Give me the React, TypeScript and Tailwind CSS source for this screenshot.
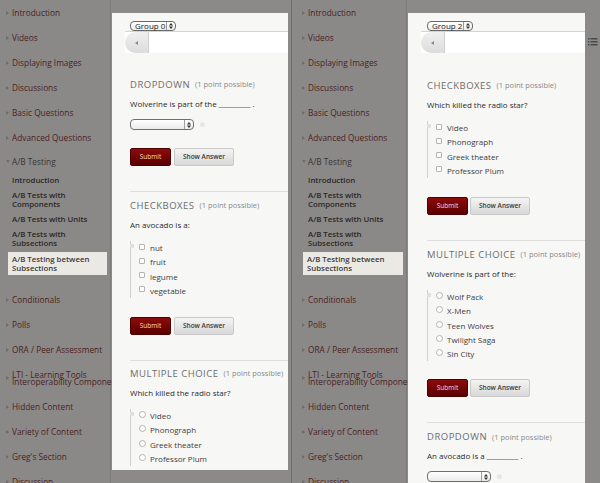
import React from "react";

const TOP_ITEMS = [
  "Introduction",
  "Videos",
  "Displaying Images",
  "Discussions",
  "Basic Questions",
  "Advanced Questions",
];

const BOTTOM_ITEMS = ["Hidden Content", "Variety of Content", "Greg's Section", "Discussion"];

function Chevron({ down }: { down?: boolean }) {
  return (
    <span className="flex w-[6px] shrink-0 items-center">
      {down ? (
        <svg width="4" height="3" viewBox="0 0 4 3">
          <path d="M0 0L4 0L2 3Z" fill="#6f6c6a" />
        </svg>
      ) : (
        <svg width="3" height="4" viewBox="0 0 3 4">
          <path d="M0 0L3 2L0 4Z" fill="#6f6c6a" />
        </svg>
      )}
    </span>
  );
}

function Row({ label, pad }: { label: string; pad: string }) {
  return (
    <div className={`flex h-[25px] items-center whitespace-nowrap ${pad}`}>
      <Chevron />
      <span className="text-[#4c1e23]">{label}</span>
    </div>
  );
}

function Sidebar({ wide }: { wide?: boolean }) {
  const pad = wide ? "pl-[10px]" : "pl-[6px]";
  const sub = wide ? "pl-[16px]" : "pl-[12px]";
  const box = wide ? "ml-[11px]" : "ml-[8px]";
  return (
    <div
      className={`${
        wide ? "w-[115px]" : "w-[111px]"
      } h-full shrink-0 border-r border-[#7d7c7a] bg-[#8a8987] text-[8.3px] leading-[9px]`}
    >
      {TOP_ITEMS.map((t) => (
        <Row key={t} label={t} pad={pad} />
      ))}
      <div className={`flex h-[23px] items-center ${pad}`}>
        <Chevron down />
        <span className="text-[#3a3432]">A/B Testing</span>
      </div>
      <div className="flex flex-col gap-[6px] pt-[3px] text-[7.8px] font-semibold text-[#2b2725]">
        <div className={sub}>Introduction</div>
        <div className={sub}>
          A/B Tests with
          <br />
          Components
        </div>
        <div className={sub}>A/B Tests with Units</div>
        <div className={sub}>
          A/B Tests with
          <br />
          Subsections
        </div>
        <div className={`${box} mr-[3px] -mt-[2px] bg-[#ebe9e3] pt-[3px] pb-[2px] pl-[4px] text-[#3c3937]`}>
          A/B Testing between
          <br />
          Subsections
        </div>
      </div>
      <div className="h-[12px]" />
      <Row label="Conditionals" pad={pad} />
      <Row label="Polls" pad={pad} />
      <Row label="ORA / Peer Assessment" pad={pad} />
      <div className={`flex h-[32px] items-center whitespace-nowrap ${pad}`}>
        <Chevron />
        <span className="leading-[7.5px] text-[#4c1e23]">
          LTI - Learning Tools
          <br />
          Interoperability Component
        </span>
      </div>
      {BOTTOM_ITEMS.map((t) => (
        <Row key={t} label={t} pad={pad} />
      ))}
    </div>
  );
}

function UpDown() {
  return (
    <svg width="4" height="6" viewBox="0 0 4 6">
      <path d="M0 2.4L2 0L4 2.4Z" fill="#333" />
      <path d="M0 3.6L2 6L4 3.6Z" fill="#333" />
    </svg>
  );
}

function GroupSelect({ label }: { label: string }) {
  return (
    <div className="flex h-[10px] w-[46px] items-center rounded-[4px] border border-[#6a6a6a] bg-gradient-to-b from-white to-[#ececec]">
      <span className="flex-1 pl-[4px] text-[8px] leading-[8px] text-[#222]">{label}</span>
      <span className="flex h-full w-[9px] items-center justify-center border-l border-[#9a9a9a]">
        <UpDown />
      </span>
    </div>
  );
}

function DropSelect() {
  return (
    <div className="flex items-center gap-[6px]">
      <div className="flex h-[11px] w-[64px] items-center rounded-[4px] border border-[#6f6f6f] bg-gradient-to-b from-white to-[#ebebeb]">
        <span className="flex-1" />
        <span className="flex h-full w-[9px] items-center justify-center border-l border-[#a0a0a0]">
          <UpDown />
        </span>
      </div>
      <span className="h-[5px] w-[5px] rounded-full bg-[#e6e6e6]" />
    </div>
  );
}

function NavBar() {
  return (
    <div className="ml-[13px] flex h-[22px] border-t border-[#d4d4d4] bg-white">
      <div className="flex w-[24px] items-center justify-center rounded-l-[11px] border-r border-[#cfcfcf] bg-gradient-to-b from-[#f0f0f0] to-[#dcdcdc]">
        <svg width="3" height="4" viewBox="0 0 3 4">
          <path d="M3 0L0 2L3 4Z" fill="#8a8a8a" />
        </svg>
      </div>
    </div>
  );
}

function Heading({ title }: { title: string }) {
  return (
    <div className="flex h-[12px] items-center whitespace-nowrap">
      <span className="text-[9.5px] tracking-[0.5px] text-[#6d6d6d]">{title}</span>
      <span className="ml-[5px] text-[7.5px] text-[#8a8a8a]">(1 point possible)</span>
    </div>
  );
}

function Prompt({ text }: { text: string }) {
  return <div className="mt-[7px] h-[12px] whitespace-nowrap text-[8px] leading-[12px] text-[#2a2a2a]">{text}</div>;
}

function Options({ items, radio }: { items: string[]; radio?: boolean }) {
  return (
    <div className="relative mt-[10px] border-l border-[#cfcfcf]">
      <span className="absolute top-[3px] -left-[1px] h-[4px] w-[4px] rounded-[1px] bg-[#e0e0e0]" />
      {items.map((o) => (
        <div key={o} className="flex h-[14.25px] items-center whitespace-nowrap">
          <span
            className={`ml-[8px] mb-[3px] h-[6px] w-[6px] border border-[#b4b4b4] bg-white ${
              radio ? "h-[7px] w-[7px] rounded-full" : "rounded-[1px]"
            }`}
          />
          <span className={`${radio ? "ml-[4px]" : "ml-[5px]"} text-[8px] text-[#3d3d3d]`}>{o}</span>
        </div>
      ))}
    </div>
  );
}

function Buttons({ gap, top }: { gap: string; top: string }) {
  return (
    <div className={`flex ${top} ${gap}`}>
      <div className="flex h-[18px] w-[41px] items-center justify-center rounded-[2px] border border-[#4c0000] bg-gradient-to-b from-[#8c0d0d] to-[#5c0000] text-[6.5px] text-[#f3dede]">
        Submit
      </div>
      <div className="flex h-[18px] w-[60px] items-center justify-center rounded-[2px] border border-[#c9c9c9] bg-gradient-to-b from-[#f4f4f4] to-[#d8d8d8] text-[6.5px] font-semibold text-[#3a3a3a]">
        Show Answer
      </div>
    </div>
  );
}

function Rule() {
  return <div className="mt-[25px] border-t border-[#dedede]" />;
}

function LeftCard() {
  return (
    <div className="relative mt-[13px] h-[457px] w-[176px] shrink-0 overflow-hidden bg-[#f7f7f6]">
      <div className="pt-[8px] pl-[18px]">
        <GroupSelect label="Group 0" />
      </div>
      <NavBar />
      <div className="pl-[18px]">
        <div className="mt-[26px]">
          <Heading title="DROPDOWN" />
        </div>
        <Prompt text="Wolverine is part of the _________ ." />
        <div className="mt-[9px]">
          <DropSelect />
        </div>
        <Buttons gap="gap-[3px]" top="mt-[18px]" />
        <Rule />
        <div className="mt-[8px]">
          <Heading title="CHECKBOXES" />
        </div>
        <Prompt text="An avocado is a:" />
        <Options items={["nut", "fruit", "legume", "vegetable"]} />
        <Buttons gap="gap-[3px]" top="mt-[19px]" />
        <Rule />
        <div className="mt-[7px]">
          <Heading title="MULTIPLE CHOICE" />
        </div>
        <Prompt text="Which killed the radio star?" />
        <Options radio items={["Video", "Phonograph", "Greek theater", "Professor Plum"]} />
      </div>
    </div>
  );
}

function RightCard() {
  return (
    <div className="relative mt-[13px] h-[470px] w-[177px] shrink-0 overflow-hidden bg-[#f7f7f6]">
      <div className="pt-[8px] pl-[19px]">
        <GroupSelect label="Group 2" />
      </div>
      <NavBar />
      <div className="pl-[19px]">
        <div className="mt-[27px]">
          <Heading title="CHECKBOXES" />
        </div>
        <Prompt text="Which killed the radio star?" />
        <Options items={["Video", "Phonograph", "Greek theater", "Professor Plum"]} />
        <Buttons gap="gap-[2px]" top="mt-[19px]" />
        <Rule />
        <div className="mt-[8px]">
          <Heading title="MULTIPLE CHOICE" />
        </div>
        <Prompt text="Wolverine is part of the:" />
        <Options radio items={["Wolf Pack", "X-Men", "Teen Wolves", "Twilight Saga", "Sin City"]} />
        <Buttons gap="gap-[2px]" top="mt-[18px]" />
        <Rule />
        <div className="mt-[8px]">
          <Heading title="DROPDOWN" />
        </div>
        <Prompt text="An avocado is a _________ ." />
        <div className="mt-[9px]">
          <DropSelect />
        </div>
      </div>
    </div>
  );
}

function ListIcon() {
  return (
    <svg width="10" height="10" viewBox="0 0 10 10">
      <rect x="0" y="1" width="1.5" height="1.5" fill="#4a4a4a" />
      <rect x="2.5" y="1" width="7" height="1.5" fill="#4a4a4a" />
      <rect x="0" y="4" width="1.5" height="1.5" fill="#4a4a4a" />
      <rect x="2.5" y="4" width="7" height="1.5" fill="#4a4a4a" />
      <rect x="0" y="7" width="1.5" height="1.5" fill="#4a4a4a" />
      <rect x="2.5" y="7" width="7" height="1.5" fill="#4a4a4a" />
    </svg>
  );
}

export default function App() {
  return (
    <div className="flex h-[483px] w-[600px] overflow-hidden bg-[#8b8a88] font-['Open_Sans',sans-serif]">
      <div className="flex h-full w-[291px] shrink-0">
        <Sidebar />
        <div className="w-[1px] shrink-0" />
        <LeftCard />
      </div>
      <div className="flex h-full w-[309px] shrink-0 border-l border-[#6f6e6c]">
        <Sidebar wide />
        <div className="w-[1px] shrink-0" />
        <RightCard />
        <div className="flex-1 pt-[37px] pl-[3px]">
          <ListIcon />
        </div>
      </div>
    </div>
  );
}
